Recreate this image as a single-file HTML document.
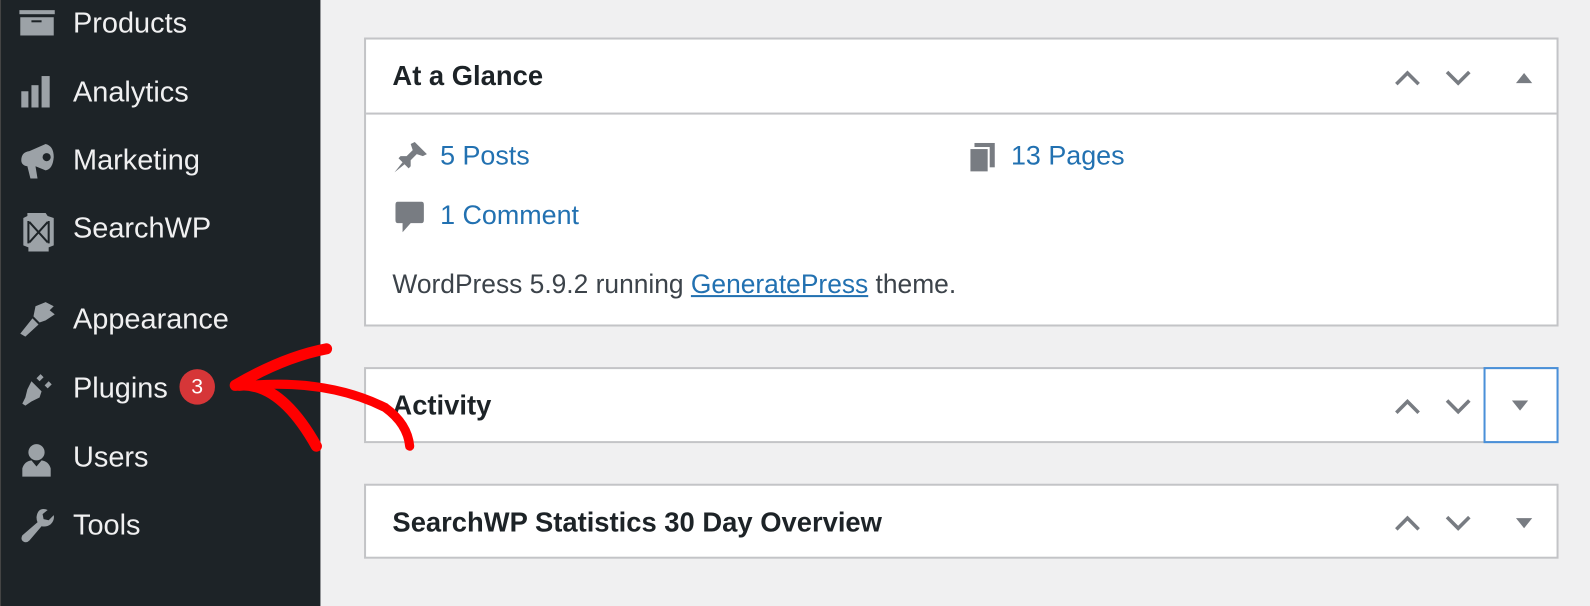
<!DOCTYPE html>
<html><head><style>
*{margin:0;padding:0;box-sizing:border-box}
body{width:1590px;height:598px;background:#f0f0f1;font-family:"Liberation Sans",sans-serif;position:relative;overflow:hidden}
#w{position:absolute;left:0;top:0;width:1568px;height:590px;transform:scale(1.01403);transform-origin:0 0}
#side{position:absolute;left:0;top:0;width:316px;height:598px;background:#1d2327;border-left:1px solid #444}
.mi{position:absolute;left:71px;color:#f0f0f1;font-size:28.5px}
.ic{position:absolute;left:18px;fill:#9ca2a7}
.box{position:absolute;left:359px;width:1178px;background:#fff;border:2px solid #c3c4c7}
.h{position:absolute;left:26px;font-size:27px;font-weight:bold;color:#1d2327}
.ctl{position:absolute;fill:none;stroke:#787c82;stroke-width:3.5}
a{color:#2271b1;text-decoration:none}
.t{position:absolute;font-size:26.5px}
</style></head><body><div id="w">
<div id="side">
<svg class="ic" style="top:8px" width="36" height="30"><rect x="0" y="2" width="35" height="4"/><rect x="1" y="9" width="33" height="18"/><rect x="12" y="12" width="10" height="2" fill="#1d2327"/></svg>
<div class="mi" style="top:7px">Products</div>
<svg class="ic" style="top:74px" width="36" height="32"><rect x="2" y="16" width="7" height="16"/><rect x="12" y="10" width="7" height="22"/><rect x="22" y="1" width="8" height="31"/></svg>
<div class="mi" style="top:75px">Analytics</div>
<svg class="ic" style="top:140px" width="36" height="38"><path d="M2 18 Q2 10 10 9 L26 2 Q34 4 34 15 Q33 27 26 28 L16 24 L18 36 L11 36 L8 24 Q2 23 2 18Z"/><circle cx="27" cy="15" r="4" fill="#1d2327"/></svg>
<div class="mi" style="top:142px">Marketing</div>
<svg class="ic" style="top:204px" width="36" height="46"><path d="M8 6 L26 6 L28 9 L34 11 L34 38 L29 40 L29 44 L9 44 L9 40 L4 38 L4 11 L8 9Z"/><path d="M9 14 L9 36 M29 14 L29 36 M10 15 L28 35 M28 15 L10 35" stroke="#1d2327" stroke-width="2"/></svg>
<div class="mi" style="top:209px">SearchWP</div>
<svg class="ic" style="top:296px" width="36" height="36"><path d="M16 6 L26 2 L34 6 L30 10 L35 14 L26 20 L20 22 L14 16Z M13 18 L19 24 L6 36 L1 33Z"/></svg>
<div class="mi" style="top:299px">Appearance</div>
<svg class="ic" style="top:368px" width="36" height="36"><path d="M12 8 L22 18 L20 24 L12 28 L6 32 L3 30 L6 24 L8 16Z M17 5 L21 1 L24 4 L20 8Z M25 12 L29 8 L32 11 L28 15Z"/></svg>
<div class="mi" style="top:367px">Plugins</div>
<div style="position:absolute;left:176px;top:364px;width:35px;height:35px;border-radius:50%;background:#d63638;color:#fff;font-size:21px;text-align:center;line-height:35px">3</div>
<svg class="ic" style="top:436px" width="36" height="36"><circle cx="17" cy="10" r="8"/><path d="M3 34 L3 26 Q5 19 12 18 L17 24 L22 18 Q29 19 31 26 L31 34Z"/></svg>
<div class="mi" style="top:435px">Users</div>
<svg class="ic" style="top:500px" width="36" height="36"><path d="M24 2 Q18 2 17 10 Q17 13 18 15 L3 28 Q1 32 4 34 Q7 36 10 33 L22 19 Q27 20 31 17 Q35 13 34 8 L29 13 L24 12 L23 7 L28 3 Q26 2 24 2Z"/></svg>
<div class="mi" style="top:502px">Tools</div>
</div>

<div class="box" style="top:37px;height:285px">
<div style="position:absolute;left:0;right:0;top:0;height:74px;border-bottom:2px solid #c3c4c7"></div>
<div class="h" style="top:21px">At a Glance</div>
<svg class="ctl" style="left:1012px;top:26px" width="150" height="24"><path d="M4 18 L15 7 L26 18 M54 6 L65 17 L76 6"/><path d="M122 17 L138 17 L130 7Z" fill="#787c82" stroke="none"/></svg>
<svg style="position:absolute;left:26px;top:99px" width="36" height="34" fill="#787c82"><path d="M22 2 L34 14 L30 16 L24 14 L18 20 L18 26 L16 28 L6 18 L8 16 L14 16 L20 10 L18 4Z M10 22 L2 32 L12 24Z"/></svg>
<div class="t" style="left:73px;top:99px"><a>5 Posts</a></div>
<svg style="position:absolute;left:592px;top:100px" width="30" height="32" fill="#787c82"><rect x="8" y="2" width="20" height="24"/><rect x="3" y="7" width="19" height="24" stroke="#fff" stroke-width="2"/></svg>
<div class="t" style="left:636px;top:99px"><a>13 Pages</a></div>
<svg style="position:absolute;left:28px;top:158px" width="30" height="34" fill="#787c82"><path d="M3 2 L27 2 Q29 2 29 5 L29 20 Q29 23 27 23 L16 23 L8 32 L8 23 L3 23 Q1 23 1 20 L1 5 Q1 2 3 2Z"/></svg>
<div class="t" style="left:73px;top:158px"><a>1 Comment</a></div>
<div class="t" style="left:26px;top:226px;color:#3c434a;font-size:26px">WordPress 5.9.2 running <a style="text-decoration:underline">GeneratePress</a> theme.</div>
</div>

<div class="box" style="top:362px;height:75px">
<div class="h" style="top:21px">Activity</div>
<svg class="ctl" style="left:1012px;top:25px" width="80" height="24"><path d="M4 18 L15 7 L26 18 M54 6 L65 17 L76 6"/></svg>
<div style="position:absolute;left:1102px;top:-2px;width:74px;height:75px;border:2px solid #4a90d9"></div>
<svg style="position:absolute;left:1129px;top:30px" width="18" height="13"><path d="M1 1 L17 1 L9 11Z" fill="#787c82"/></svg>
</div>

<div class="box" style="top:477px;height:74px">
<div class="h" style="top:21px">SearchWP Statistics 30 Day Overview</div>
<svg class="ctl" style="left:1012px;top:25px" width="150" height="24"><path d="M4 18 L15 7 L26 18 M54 6 L65 17 L76 6"/><path d="M122 7 L138 7 L130 17Z" fill="#787c82" stroke="none"/></svg>
</div>

<svg style="position:absolute;left:0;top:0" width="1590" height="598" fill="none" stroke="#ff0000" stroke-linecap="round" stroke-linejoin="round">
<path d="M322 344 Q280 352 232 380 Q275 374 312 440" stroke-width="11"/>
<path d="M236 381 Q320 372 380 402 Q402 418 404 440" stroke-width="9"/>
</svg>
</div></body></html>
